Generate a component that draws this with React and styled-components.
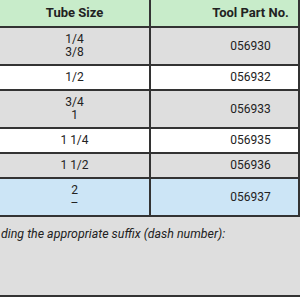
import React from 'react';
import styled, { createGlobalStyle } from 'styled-components';

const GlobalStyle = createGlobalStyle`
  html, body {
    margin: 0;
    padding: 0;
    background: #ffffff;
  }
  body {
    width: 300px;
    height: 300px;
    overflow: hidden;
    font-family: Roboto, "Liberation Sans", Arial, sans-serif;
    color: #222222;
  }
`;

const Table = styled.div`
  width: 300px;
  display: flex;
  flex-direction: column;
`;

const Row = styled.div`
  display: grid;
  grid-template-columns: 151px 149px;
  background: ${p => p.$bg || '#ffffff'};
  border-bottom: 2px solid #333333;
`;

const Cell = styled.div`
  box-sizing: border-box;
  border-right: 2px solid #333333;
  padding: ${p => (p.$head ? '6px 0 7px' : '5px 0')};
  padding-left: ${p => (p.$part ? '52px' : '0')};
  text-align: center;
  font-size: ${p => (p.$head ? '13px' : '12px')};
  font-weight: ${p => (p.$head ? 700 : 400)};
  line-height: 13px;
  display: flex;
  flex-direction: column;
  justify-content: center;
`;

const Note = styled.div`
  height: 80px;
  box-sizing: border-box;
  padding: 10px 0 0 1px;
  background: #dedede;
  border-bottom: 2px solid #333333;
  font-size: 12.4px;
  font-style: italic;
  line-height: 13px;
  white-space: nowrap;
`;

const rows = [
  { sizes: ['1/4', '3/8'], part: '056930', bg: '#dedede' },
  { sizes: ['1/2'], part: '056932', bg: '#ffffff' },
  { sizes: ['3/4', '1'], part: '056933', bg: '#dedede' },
  { sizes: ['1 1/4'], part: '056935', bg: '#ffffff' },
  { sizes: ['1 1/2'], part: '056936', bg: '#dedede' },
  { sizes: ['2', '–'], part: '056937', bg: '#cce5f6' },
];

export default function App() {
  return (
    <>
      <GlobalStyle />
      <Table>
        <Row $bg="#c8ecca">
          <Cell $head>Tube Size</Cell>
          <Cell $head $part>Tool Part No.</Cell>
        </Row>
        {rows.map(r => (
          <Row key={r.part} $bg={r.bg}>
            <Cell>
              {r.sizes.map(s => (
                <span key={s}>{s}</span>
              ))}
            </Cell>
            <Cell $part>{r.part}</Cell>
          </Row>
        ))}
        <Note>ding the appropriate suffix (dash number):</Note>
      </Table>
    </>
  );
}
